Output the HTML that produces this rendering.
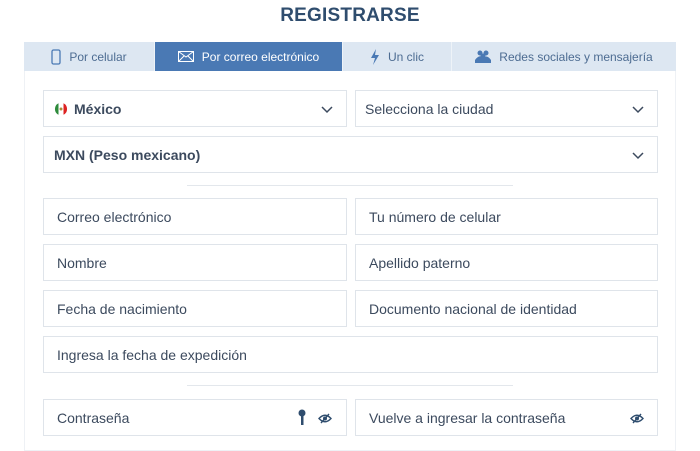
<!DOCTYPE html>
<html><head><meta charset="utf-8"><style>
*{box-sizing:border-box;margin:0;padding:0}
body{width:700px;height:449px;background:#fff;font-family:"Liberation Sans",sans-serif;position:relative;overflow:hidden;color:#3c4a5e}
.t{position:absolute;top:5px;left:0;width:700px;text-align:center;font-weight:bold;font-size:19px;color:#2f4d6e;letter-spacing:0.2px}
.tabs{position:absolute;top:42px;left:24px;width:652px;height:29px;background:#dde7f2;display:flex;font-size:12px;color:#4d6c92}
.tab{height:29px;display:flex;align-items:center;justify-content:center;gap:8px;border-right:1px solid #eef3f8}
.act{background:#4a79b4;color:#fff}
.panel{position:absolute;top:71px;left:24px;width:652px;height:380px;border:1px solid #eef1f5;border-top:none}
.f{position:absolute;height:37px;border:1px solid #dfe4ea;font-size:14px;display:flex;align-items:center;padding-left:13px;color:#3c4a5e}
.chev{position:absolute;right:12px;top:11px}
.hr{position:absolute;left:187px;width:326px;height:1px;background:#e3e7ec}
</style></head><body>
<div class="t">REGISTRARSE</div>
<div class="tabs">
<div class="tab" style="width:131px"><svg width="10" height="16"><rect x="1" y="1" width="8" height="14" rx="1.5" fill="none" stroke="#4a79b4" stroke-width="1.3"/></svg>Por celular</div>
<div class="tab act" style="width:188px"><svg width="16" height="11"><rect x="0.5" y="0.5" width="15" height="10" fill="none" stroke="#fff"/><path d="M0.5 0.5L8 6L15.5 0.5M0.5 10.5L6 5M15.5 10.5L10 5" fill="none" stroke="#fff"/></svg>Por correo electrónico</div>
<div class="tab" style="width:109px"><svg width="10" height="16"><path d="M6 0L1 9H5L3 16L9 6H5Z" fill="#4a79b4"/></svg>Un clic</div>
<div class="tab" style="width:224px;border:none"><svg width="16" height="13"><circle cx="5" cy="3" r="2.5" fill="#4a79b4"/><circle cx="11" cy="3" r="2.5" fill="#4a79b4"/><circle cx="8" cy="6" r="2.5" fill="#4a79b4"/><path d="M0 10Q5 3 9 9V13H0ZM7 10Q11 3 16 10V13H7Z" fill="#4a79b4"/></svg>Redes sociales y mensajería</div>
</div>
<div class="panel"></div>
<div class="f" style="left:43px;top:90px;width:304px;font-weight:bold;padding-left:10px"><svg width="14" height="14" style="margin-right:6px"><circle cx="7" cy="7" r="6.5" fill="#fff"/><path d="M4.5 1.2A6.5 6.5 0 0 0 4.5 12.8Z" fill="#2e8b3c"/><path d="M9.5 1.2A6.5 6.5 0 0 1 9.5 12.8Z" fill="#d22"/><circle cx="7" cy="7" r="1.5" fill="#b08a3a"/></svg>México<svg class="chev" width="14" height="14"><path d="M2 5L7 10L12 5" fill="none" stroke="#3c4a5e" stroke-width="1.5"/></svg></div>
<div class="f" style="left:355px;top:90px;width:303px;padding-left:9px">Selecciona la ciudad<svg class="chev" width="14" height="14"><path d="M2 5L7 10L12 5" fill="none" stroke="#3c4a5e" stroke-width="1.5"/></svg></div>
<div class="f" style="left:43px;top:136px;width:615px;font-weight:bold;padding-left:10px">MXN (Peso mexicano)<svg class="chev" width="14" height="14"><path d="M2 5L7 10L12 5" fill="none" stroke="#3c4a5e" stroke-width="1.5"/></svg></div>
<div class="hr" style="top:185px"></div>
<div class="f" style="left:43px;top:198px;width:304px">Correo electrónico</div>
<div class="f" style="left:355px;top:198px;width:303px">Tu número de celular</div>
<div class="f" style="left:43px;top:244px;width:304px">Nombre</div>
<div class="f" style="left:355px;top:244px;width:303px">Apellido paterno</div>
<div class="f" style="left:43px;top:290px;width:304px">Fecha de nacimiento</div>
<div class="f" style="left:355px;top:290px;width:303px">Documento nacional de identidad</div>
<div class="f" style="left:43px;top:336px;width:615px">Ingresa la fecha de expedición</div>
<div class="hr" style="top:385px"></div>
<div class="f" style="left:43px;top:399px;width:304px">Contraseña
<svg style="position:absolute;left:253px;top:9px" width="10" height="18"><circle cx="5" cy="4" r="3.5" fill="#2f4d6e"/><rect x="4" y="6" width="2.5" height="10" fill="#2f4d6e"/></svg>
<svg style="position:absolute;left:274px;top:13px" width="14" height="11"><path d="M1 5.5Q7 -1 13 5.5Q7 12 1 5.5Z" fill="none" stroke="#2f4d6e" stroke-width="1.4"/><circle cx="7" cy="5.5" r="2" fill="#2f4d6e"/><path d="M3 10L11 1" stroke="#2f4d6e" stroke-width="1.4"/></svg></div>
<div class="f" style="left:355px;top:399px;width:303px">Vuelve a ingresar la contraseña
<svg style="position:absolute;left:274px;top:13px" width="14" height="11"><path d="M1 5.5Q7 -1 13 5.5Q7 12 1 5.5Z" fill="none" stroke="#2f4d6e" stroke-width="1.4"/><circle cx="7" cy="5.5" r="2" fill="#2f4d6e"/><path d="M3 10L11 1" stroke="#2f4d6e" stroke-width="1.4"/></svg></div>
</body></html>
